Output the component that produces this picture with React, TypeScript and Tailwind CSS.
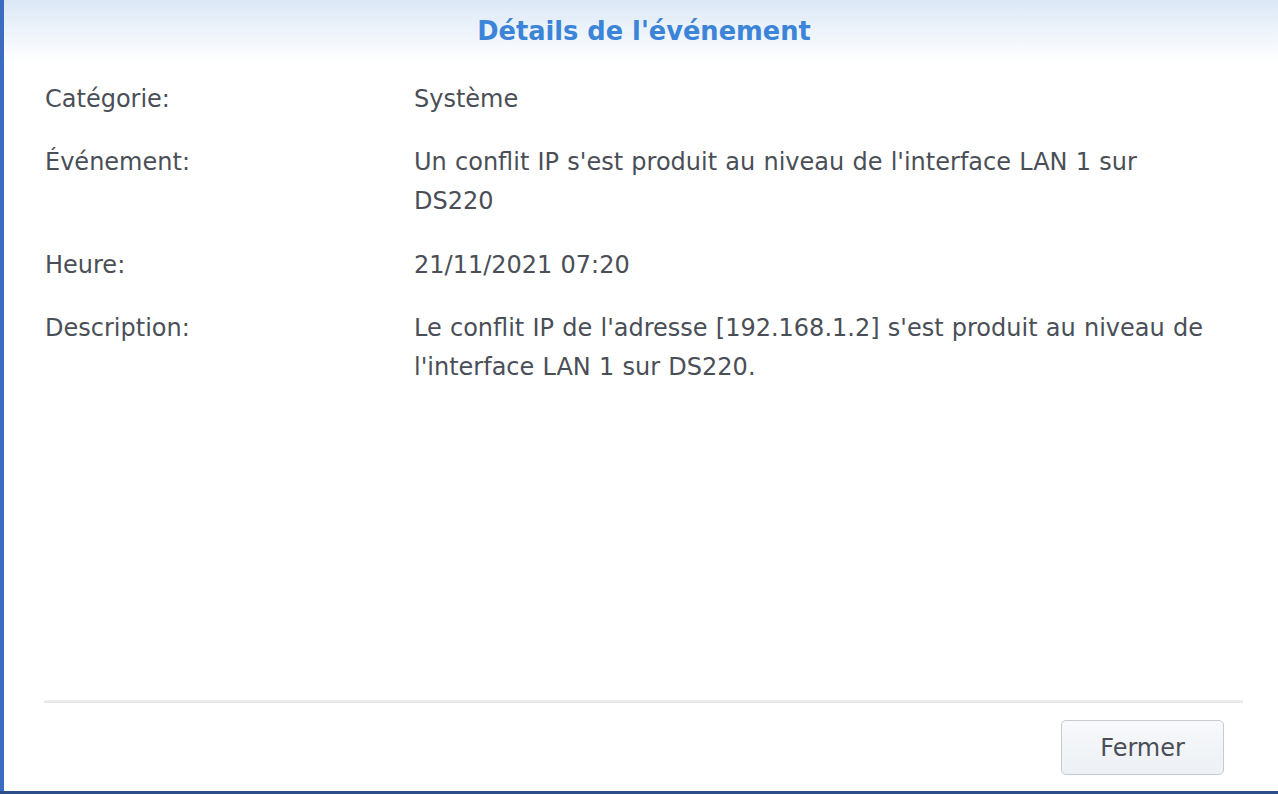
import React from "react";

const rows: { label: string; value: string }[] = [
  { label: "Catégorie:", value: "Système" },
  { label: "Événement:", value: "Un conflit IP s'est produit au niveau de l'interface LAN 1 sur DS220" },
  { label: "Heure:", value: "21/11/2021 07:20" },
  {
    label: "Description:",
    value: "Le conflit IP de l'adresse [192.168.1.2] s'est produit au niveau de l'interface LAN 1 sur DS220.",
  },
];

export default function App() {
  return (
    <div className="w-[1278px] h-[794px] overflow-hidden bg-[#2c4f8c] flex flex-col">
      <div className="flex-1 flex min-h-0">
        <div className="w-[4px] bg-[#3b6cc0]" />
        <div
          className="flex-1 flex flex-col bg-white text-[#4a4f57]"
          style={{ fontFamily: '"DejaVu Sans", Verdana, sans-serif' }}
        >
          <div className="h-[62px] bg-gradient-to-b from-[#dbe8f6] to-white flex items-start justify-center pt-[16px]">
            <h1 className="text-[25.7px] font-bold text-[#3c84d8] leading-[30px] pl-[6px]">
              Détails de l'événement
            </h1>
          </div>
          <div className="flex-1 flex flex-col pl-[41px] pt-[17.5px] gap-[24.5px] text-[24px] leading-[39px] [word-spacing:0.6px]">
            {rows.map((r) => (
              <div key={r.label} className="flex">
                <div className="w-[369px] shrink-0">{r.label}</div>
                <div className="w-[805px]">{r.value}</div>
              </div>
            ))}
          </div>
          <div className="ml-[40px] mr-[35px] h-[3px] bg-gradient-to-b from-[#f2f2f2] to-[#e2e2e4]" />
          <div className="h-[88px] flex items-start justify-end pr-[54px] pt-[17px]">
            <button className="w-[163px] h-[55px] rounded-[5px] border border-[#c6cad1] bg-gradient-to-b from-[#f7f9fb] to-[#edf0f4] text-[24px] text-[#4a4f57]">
              Fermer
            </button>
          </div>
        </div>
      </div>
      <div className="h-[3px] bg-[#2c4f8c]" />
    </div>
  );
}
